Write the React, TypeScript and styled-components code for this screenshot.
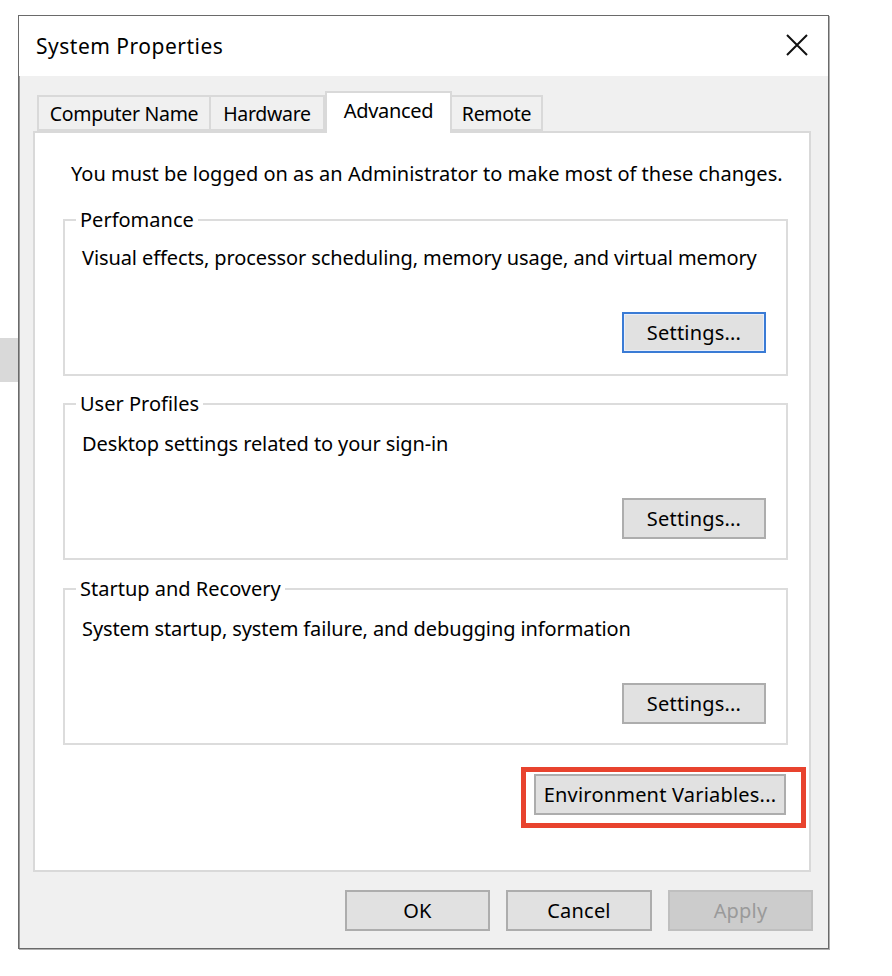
import React from "react";
import styled, { createGlobalStyle } from "styled-components";

const GlobalStyle = createGlobalStyle`
  html, body {
    margin: 0;
    padding: 0;
    background: #ffffff;
  }
  body {
    font-family: "Noto Sans", "Liberation Sans", Arial, sans-serif;
    color: #000;
  }
`;

const Desktop = styled.div`
  position: relative;
  width: 892px;
  height: 976px;
  padding: 15px 0 0 18px;
  box-sizing: border-box;
  overflow: hidden;
`;

const BehindStrip = styled.div`
  position: absolute;
  left: 0;
  top: 338px;
  width: 18px;
  height: 44px;
  background: #d9d9d9;
`;

const Window = styled.div`
  position: relative;
  width: 811px;
  height: 934px;
  box-sizing: border-box;
  border: 1px solid #6a6a6a;
  box-shadow: inset 1px 0 0 #9a9a9a, 1px 1px 0 #b0b0b0;
  background: #f0f0f0;
  display: flex;
  flex-direction: column;
`;

const TitleBar = styled.div`
  height: 60px;
  background: #ffffff;
  display: flex;
  align-items: center;
  justify-content: space-between;
  padding: 0 18px 0 17px;
`;

const Title = styled.span`
  font-size: 21px;
  letter-spacing: 0.5px;
  margin-top: -1px;
`;

const CloseButton = styled.button`
  width: 26px;
  height: 26px;
  padding: 0;
  border: none;
  background: transparent;
  display: flex;
  align-items: center;
  justify-content: center;
  margin-top: -2px;
`;

const Body = styled.div`
  flex: 1;
  padding: 15px 17px 17px 14px;
  display: flex;
  flex-direction: column;
`;

const TabRow = styled.div`
  display: flex;
  align-items: flex-end;
  height: 40px;
  padding-left: 4px;
  position: relative;
  z-index: 1;
`;

const Tab = styled.div<{ $active?: boolean; $w: number }>`
  width: ${(p) => p.$w}px;
  box-sizing: border-box;
  height: ${(p) => (p.$active ? "42px" : "36px")};
  margin-bottom: ${(p) => (p.$active ? "-2px" : "0")};
  padding-bottom: ${(p) => (p.$active ? "6px" : "0")};
  background: ${(p) => (p.$active ? "#ffffff" : "#f0f0f0")};
  border: 2px solid #d9d9d9;
  border-bottom: ${(p) => (p.$active ? "none" : "2px solid #d9d9d9")};
  border-left: ${(p) => (p.$active ? "2px solid #d9d9d9" : "none")};
  &:first-child {
    border-left: 2px solid #d9d9d9;
  }
  display: flex;
  align-items: center;
  justify-content: center;
  font-size: ${(p) => (p.$active ? "20px" : "19.5px")};
  letter-spacing: -0.3px;
`;

const Panel = styled.div`
  height: 741px;
  box-sizing: border-box;
  background: #ffffff;
  border: 2px solid #d9d9d9;
  padding: 29px 21px 0 28px;
  display: flex;
  flex-direction: column;
`;

const Intro = styled.p`
  margin: 0 0 22px 8px;
  font-size: 20px;
  line-height: 24px;
`;

const Group = styled.fieldset<{ $gap: number; $top: number }>`
  margin: 0 0 ${(p) => p.$gap}px 0;
  padding: ${(p) => p.$top}px 20px ${(p) => 35 - p.$top}px 17px;
  border: 2px solid #dcdcdc;
  display: flex;
  flex-direction: column;
  min-width: 0;
`;

const Legend = styled.legend`
  padding: 0 4px;
  margin-left: -6px;
  font-size: 20px;
  line-height: 24px;
`;

const Description = styled.div`
  font-size: 20px;
  line-height: 24px;
  letter-spacing: -0.1px;
`;

const ButtonRow = styled.div<{ $top?: number; $right?: number; $gap?: number }>`
  display: flex;
  justify-content: flex-end;
  gap: ${(p) => p.$gap ?? 0}px;
  margin-top: ${(p) => p.$top ?? 0}px;
  margin-right: ${(p) => p.$right ?? 0}px;
`;

const Button = styled.button<{ $w?: number; $focused?: boolean; $disabled?: boolean }>`
  width: ${(p) => p.$w ?? 144}px;
  height: 41px;
  box-sizing: border-box;
  font-family: inherit;
  font-size: 20px;
  letter-spacing: 0.2px;
  padding: 0;
  background: ${(p) => (p.$disabled ? "#cccccc" : "#e1e1e1")};
  color: ${(p) => (p.$disabled ? "#9a9a9a" : "#000000")};
  border: 2px solid
    ${(p) => (p.$focused ? "#3a7bd5" : p.$disabled ? "#bfbfbf" : "#adadad")};
  box-shadow: ${(p) => (p.$focused ? "inset 0 0 0 1px #e8eefa" : "none")};
`;

const Highlight = styled.div`
  position: relative;
`;

const RedBox = styled.div`
  position: absolute;
  left: -13px;
  top: -7px;
  right: -20px;
  bottom: -13px;
  border: 5px solid #e8432e;
  pointer-events: none;
`;

const CloseIcon = () => (
  <svg width="22" height="22" viewBox="0 0 22 22">
    <path d="M1 1 L21 21 M21 1 L1 21" stroke="#111" strokeWidth="2" fill="none" />
  </svg>
);

const tabs = [
  { label: "Computer Name", w: 174 },
  { label: "Hardware", w: 114 },
  { label: "Advanced", w: 127, active: true },
  { label: "Remote", w: 91 },
];

const groups = [
  {
    title: "Perfomance",
    text: "Visual effects, processor scheduling, memory usage, and virtual memory",
    focused: true,
    gap: 16,
    top: 14,
  },
  {
    title: "User Profiles",
    text: "Desktop settings related to your sign-in",
    gap: 17,
    top: 16,
  },
  {
    title: "Startup and Recovery",
    text: "System startup, system failure, and debugging information",
    gap: 29,
    top: 16,
  },
];

export default function App() {
  return (
    <>
      <GlobalStyle />
      <Desktop>
        <BehindStrip />
        <Window>
          <TitleBar>
            <Title>System Properties</Title>
            <CloseButton aria-label="Close">
              <CloseIcon />
            </CloseButton>
          </TitleBar>
          <Body>
            <TabRow>
              {tabs.map((t) => (
                <Tab key={t.label} $w={t.w} $active={t.active}>
                  {t.label}
                </Tab>
              ))}
            </TabRow>
            <Panel>
              <Intro>
                You must be logged on as an Administrator to make most of these changes.
              </Intro>
              {groups.map((g) => (
                <Group key={g.title} $gap={g.gap} $top={g.top}>
                  <Legend>{g.title}</Legend>
                  <Description>{g.text}</Description>
                  <ButtonRow $top={42}>
                    <Button $focused={g.focused}>Settings...</Button>
                  </ButtonRow>
                </Group>
              ))}
              <ButtonRow $right={2}>
                <Highlight>
                  <Button $w={252}>Environment Variables...</Button>
                  <RedBox />
                </Highlight>
              </ButtonRow>
            </Panel>
            <ButtonRow $top={18} $right={-2} $gap={16}>
              <Button $w={145}>OK</Button>
              <Button $w={146}>Cancel</Button>
              <Button $w={145} $disabled>
                Apply
              </Button>
            </ButtonRow>
          </Body>
        </Window>
      </Desktop>
    </>
  );
}
